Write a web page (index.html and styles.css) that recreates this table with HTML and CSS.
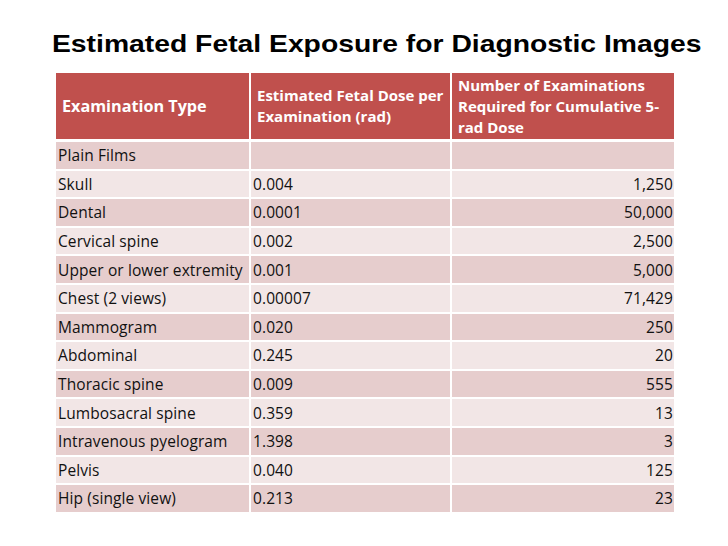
FILE: index.html
```html
<!DOCTYPE html>
<html>
<head>
<meta charset="utf-8">
<link rel="stylesheet" href="styles.css">
</head>
<body>
<div class="slide">
  <h1 class="title">Estimated Fetal Exposure for Diagnostic Images</h1>
  <table class="dose-table">
    <colgroup>
      <col class="c1"><col class="c2"><col class="c3">
    </colgroup>
    <thead>
      <tr>
        <th class="first">Examination Type</th>
        <th>Estimated Fetal Dose per Examination (rad)</th>
        <th>Number of Examinations Required for Cumulative 5-rad Dose</th>
      </tr>
    </thead>
    <tbody>
      <tr class="dark"><td>Plain Films</td><td></td><td class="num"></td></tr>
      <tr class="light"><td>Skull</td><td>0.004</td><td class="num">1,250</td></tr>
      <tr class="dark"><td>Dental</td><td>0.0001</td><td class="num">50,000</td></tr>
      <tr class="light"><td>Cervical spine</td><td>0.002</td><td class="num">2,500</td></tr>
      <tr class="dark"><td>Upper or lower extremity</td><td>0.001</td><td class="num">5,000</td></tr>
      <tr class="light"><td>Chest (2 views)</td><td>0.00007</td><td class="num">71,429</td></tr>
      <tr class="dark"><td>Mammogram</td><td>0.020</td><td class="num">250</td></tr>
      <tr class="light"><td>Abdominal</td><td>0.245</td><td class="num">20</td></tr>
      <tr class="dark"><td>Thoracic spine</td><td>0.009</td><td class="num">555</td></tr>
      <tr class="light"><td>Lumbosacral spine</td><td>0.359</td><td class="num">13</td></tr>
      <tr class="dark"><td>Intravenous pyelogram</td><td>1.398</td><td class="num">3</td></tr>
      <tr class="light"><td>Pelvis</td><td>0.040</td><td class="num">125</td></tr>
      <tr class="dark"><td>Hip (single view)</td><td>0.213</td><td class="num">23</td></tr>
    </tbody>
  </table>
</div>
</body>
</html>
```
FILE: styles.css
```css
html, body {
  margin: 0;
  padding: 0;
  background: #ffffff;
}
.slide {
  width: 728px;
  height: 546px;
  padding: 30px 0 0 52px;
  box-sizing: border-box;
  overflow: hidden;
}
.title {
  margin: 0;
  width: fit-content;
  font-family: "Liberation Sans", Arial, sans-serif;
  font-weight: bold;
  font-size: 24.5px;
  line-height: 28px;
  color: #000;
  white-space: nowrap;
  transform: scaleX(1.155);
  transform-origin: left center;
}
.dose-table {
  margin: 13px 0 0 2px;
  border-collapse: collapse;
  table-layout: fixed;
  width: 620px;
  font-family: "Open Sans", Lato, sans-serif;
  font-size: 15.5px;
  letter-spacing: 0.1px;
  color: #111;
}
.c1 { width: 195px; }
.c2 { width: 201px; }
.c3 { width: 224px; }
.dose-table th,
.dose-table td {
  border: 2px solid #ffffff;
  text-align: left;
}
.dose-table th {
  background: #c0504d;
  color: #ffffff;
  font-weight: bold;
  font-size: 15px;
  letter-spacing: 0;
  line-height: 21px;
  height: 66px;
  padding: 0 6px;
  vertical-align: middle;
  border-bottom-width: 3px;
}
.dose-table th.first {
  font-size: 16.2px;
}
.dose-table td {
  height: 26.6px;
  padding: 0 2px;
  white-space: nowrap;
  line-height: 20px;
}
.dose-table td.num {
  text-align: right;
  padding-right: 1px;
}
.dark td { background: #e6cdcd; }
.light td { background: #f2e6e6; }
```
